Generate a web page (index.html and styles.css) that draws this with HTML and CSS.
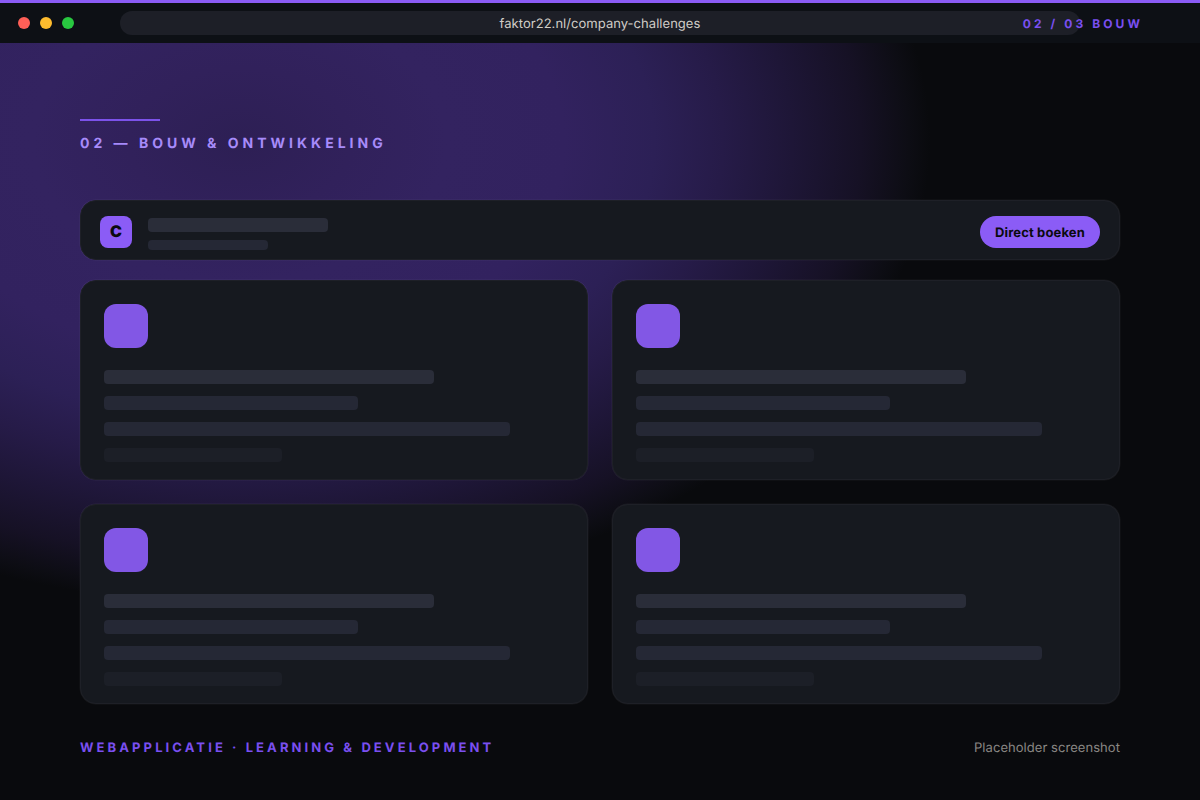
FILE: index.html
```html
<!DOCTYPE html>
<html lang="nl">
<head>
  <meta charset="UTF-8" />
  <meta name="viewport" content="width=device-width, initial-scale=1.0" />
  <title>Company Challenges</title>
  <link rel="stylesheet" href="styles.css">
</head>
<body>
  <header class="browser-bar">
    <div class="dots">
      <span class="dot red"></span>
      <span class="dot yellow"></span>
      <span class="dot green"></span>
    </div>
    <div class="url">faktor22.nl/company-challenges</div>
    <div class="step">02 / 03 BOUW</div>
  </header>

  <main>
    <h1 class="section-title">02 — BOUW &amp; ONTWIKKELING</h1>

    <div class="panel topbar">
      <div class="logo">C</div>
      <div class="topbar-lines">
        <div class="line name"></div>
        <div class="line sub"></div>
      </div>
      <button class="cta">Direct boeken</button>
    </div>

    <div class="cards">
      <div class="panel card">
        <div class="icon"></div>
        <div class="line l1"></div>
        <div class="line l2"></div>
        <div class="line l3"></div>
        <div class="line l4"></div>
      </div>
      <div class="panel card">
        <div class="icon"></div>
        <div class="line l1"></div>
        <div class="line l2"></div>
        <div class="line l3"></div>
        <div class="line l4"></div>
      </div>
      <div class="panel card">
        <div class="icon"></div>
        <div class="line l1"></div>
        <div class="line l2"></div>
        <div class="line l3"></div>
        <div class="line l4"></div>
      </div>
      <div class="panel card">
        <div class="icon"></div>
        <div class="line l1"></div>
        <div class="line l2"></div>
        <div class="line l3"></div>
        <div class="line l4"></div>
      </div>
    </div>

    <footer>
      <span class="tagline">WEBAPPLICATIE · LEARNING &amp; DEVELOPMENT</span>
      <span class="note">Placeholder screenshot</span>
    </footer>
  </main>
</body>
</html>
```

FILE: styles.css
```css
* { box-sizing: border-box; margin: 0; padding: 0; }
body {
  font-family: Inter, sans-serif;
  text-rendering: geometricPrecision;
  width: 1200px;
  height: 800px;
  overflow: hidden;
  background-color: #090a0d;
  background-image: radial-gradient(ellipse 690px 462px at 240px 142px,
    #2d1f54 0%, #31215b 16%, #332360 30%, #32225f 47%, #2c2056 60%, #261b48 70%, #1e1637 80%, #161125 90%, #0d0d14 97%, #090a0d 100%);
}

/* Browser chrome */
.browser-bar {
  position: relative;
  display: flex;
  align-items: center;
  height: 43px;
  padding: 0 120px 0 18px;
  border-top: 3px solid #8b5cf6;
  background: #0d1015;
}
.dots {
  display: flex;
  gap: 10px;
  width: 102px;
}
.dot {
  width: 12px;
  height: 12px;
  border-radius: 50%;
}
.red { background: #ff5f57; }
.yellow { background: #febc2e; }
.green { background: #28c840; }
.url {
  flex: 1;
  height: 24px;
  line-height: 26px;
  border-radius: 12px;
  background: #1d1f27;
  color: #d1cdc7;
  font-size: 13px;
  letter-spacing: 0.04px;
  text-align: center;
}
/* Step label sits over the end of the url field */
.step {
  position: absolute;
  right: 57px;
  top: 13px;
  line-height: 16px;
  color: #7a4ff0;
  font-size: 12px;
  font-weight: 700;
  letter-spacing: 3.1px;
}

main { padding: 76px 80px 0; }
.section-title {
  height: 81px;
  color: #a78bfa;
  font-size: 14px;
  font-weight: 650;
  line-height: 18px;
  letter-spacing: 4px;
}
.section-title::before {
  content: "";
  display: block;
  width: 80px;
  height: 2px;
  margin-bottom: 14px;
  background: #7c52ea;
}

.panel {
  background: #16191f;
  border: 1px solid #1e2027;
  border-radius: 16px;
  box-shadow: 0 0 0 0.5px rgba(255, 255, 255, 0.06);
}
.line { border-radius: 4px; background: #252835; }

.topbar {
  display: flex;
  align-items: center;
  height: 60px;
  padding: 0 19px;
}
.logo {
  width: 32px;
  height: 32px;
  margin-top: 3px;
  border-radius: 8px;
  background: #8b5cf6;
  color: #0a0a0f;
  font-size: 16px;
  font-weight: 900;
  line-height: 31px;
  text-align: center;
}
.topbar-lines {
  flex: 1;
  margin: 8px 0 0 16px;
}
.name { width: 180px; height: 14px; margin-bottom: 8px; background: #2a2d39; }
.sub { width: 120px; height: 10px; }
.cta {
  width: 120px;
  height: 32px;
  margin-top: 3px;
  padding-top: 2px;
  border: none;
  border-radius: 16px;
  background: #8b5cf6;
  color: #0a0a0f;
  font: 700 13px Inter, sans-serif;
  letter-spacing: 0.13px;
  text-rendering: geometricPrecision;
}

.cards {
  display: grid;
  grid-template-columns: 1fr 1fr;
  gap: 24px;
  margin-top: 20px;
}
.card {
  height: 200px;
  padding: 23px;
}
.card .line { height: 14px; margin-bottom: 12px; }
.icon {
  width: 44px;
  height: 44px;
  margin-bottom: 22px;
  border-radius: 12px;
  background: #8257e5;
}
.l1 { width: 330px; background: #2a2d39; }
.l2 { width: 254px; }
.l3 { width: 406px; }
.card .l4 { width: 178px; background: #1c1f27; }

footer {
  display: flex;
  justify-content: space-between;
  align-items: center;
  margin-top: 35px;
  font-size: 13px;
  line-height: 18px;
}
.tagline {
  color: #7a4ff0;
  font-weight: 700;
  letter-spacing: 3.1px;
}
.note { color: #8a8784; letter-spacing: 0.05px; }
```
